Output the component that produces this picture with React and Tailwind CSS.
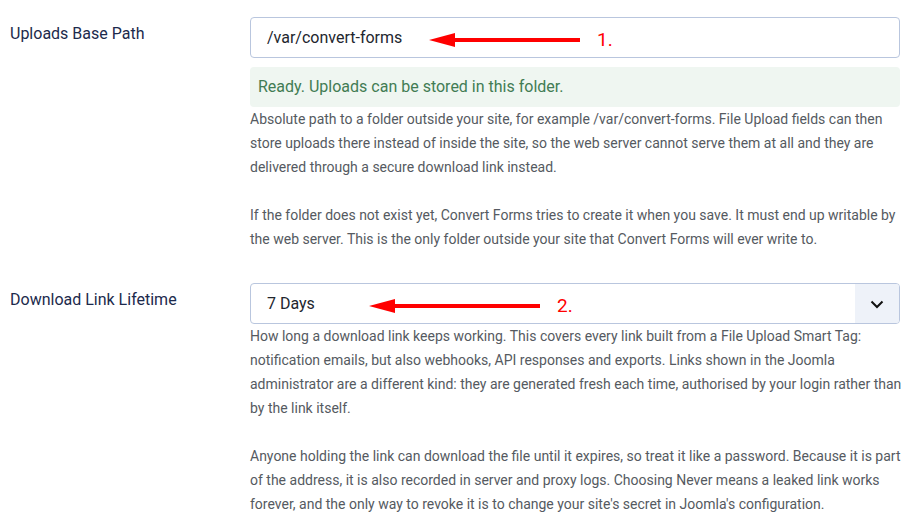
function Arrow({ width }) {
  return (
    <svg width={width} height="16" viewBox={`0 0 ${width} 16`} className="block">
      <polygon points="0,8 26,1 26,15" fill="#ff0000" />
      <rect x="24" y="6" width={width - 24} height="4" fill="#ff0000" />
    </svg>
  );
}

function Field({ label, children }) {
  return (
    <div className="flex">
      <div className="w-[240px] shrink-0 pt-[5px] text-[16px] leading-6 text-[#1c2a4c]">{label}</div>
      <div className="w-[650px]">{children}</div>
    </div>
  );
}

export default function App() {
  return (
    <div className="bg-white w-[912px] h-[528px] overflow-hidden pl-[10px] pt-[17px] font-['Roboto',sans-serif]">
      <Field label="Uploads Base Path">
        <div className="relative h-[41px] border border-[#b9c6de] rounded-[4px] flex items-center pl-4 text-[16px] text-[#22262e]">
          /var/convert-forms
          <div className="absolute left-[178px] top-[12px] flex items-center">
            <Arrow width={151} />
            <span className="ml-[17px] text-[19px] text-[#ff0000] leading-none">1.</span>
          </div>
        </div>
        <div className="mt-[9px] h-[40px] rounded-[4px] bg-[#eff6f1] flex items-center pl-2 text-[16px] text-[#427c54]">
          Ready. Uploads can be stored in this folder.
        </div>
        <div className="w-[658px] text-[14px] leading-6 text-[#555a61]">
          <p>
            Absolute path to a folder outside your site, for example /var/convert-forms. File Upload fields can then
            store uploads there instead of inside the site, so the web server cannot serve them at all and they are
            delivered through a secure download link instead.
          </p>
          <p className="mt-6">
            If the folder does not exist yet, Convert Forms tries to create it when you save. It must end up writable by
            the web server. This is the only folder outside your site that Convert Forms will ever write to.
          </p>
        </div>
      </Field>

      <div className="mt-[32px]">
        <Field label="Download Link Lifetime">
          <div className="relative h-[41px] border border-[#b9c6de] rounded-[4px] flex items-center text-[16px] text-[#22262e] overflow-hidden">
            <span className="pl-4 flex-1">7 Days</span>
            <div className="w-[44px] h-full bg-[#eef2f9] flex items-center justify-center">
              <svg width="16" height="16" viewBox="0 0 16 16" fill="none" stroke="#111" strokeWidth="2">
                <path d="M2.5 5.5 8 11l5.5-5.5" />
              </svg>
            </div>
            <div className="absolute left-[118px] top-[12px] flex items-center">
              <Arrow width={171} />
              <span className="ml-[17px] text-[19px] text-[#ff0000] leading-none">2.</span>
            </div>
          </div>
          <div className="w-[658px] text-[14px] leading-6 text-[#555a61]">
            <p>
              How long a download link keeps working. This covers every link built from a File Upload Smart Tag:
              <br />
              notification emails, but also webhooks, API responses and exports. Links shown in the Joomla
              <br />
              administrator are a different kind: they are generated fresh each time, authorised by your login rather than
              <br />
              by the link itself.
            </p>
            <p className="mt-6">
              Anyone holding the link can download the file until it expires, so treat it like a password. Because it is part
              <br />
              of the address, it is also recorded in server and proxy logs. Choosing Never means a leaked link works
              <br />
              forever, and the only way to revoke it is to change your site's secret in Joomla's configuration.
            </p>
          </div>
        </Field>
      </div>
    </div>
  );
}
